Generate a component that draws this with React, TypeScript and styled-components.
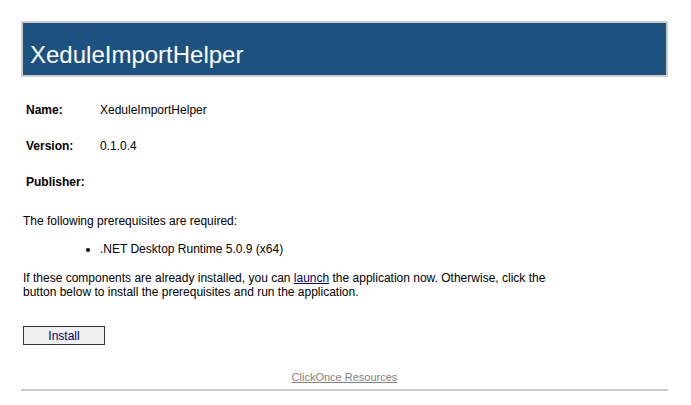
import React from "react";
import styled, { createGlobalStyle } from "styled-components";

const GlobalStyle = createGlobalStyle`
  html, body { margin: 0; padding: 0; background: #ffffff; }
  body { font-family: Tahoma, "Liberation Sans", "DejaVu Sans", sans-serif; color: #000; }
`;

const Page = styled.div`
  padding: 21px 23px 0 21px;
  font-size: 12px;
`;

const Header = styled.div`
  border: 2px solid #cccccc;
  background: #1d5280;
  display: flex;
  align-items: center;
  padding: 11px 7px 0;
  box-sizing: content-box;
  height: 41px;
`;

const Title = styled.h1`
  margin: 0;
  font-weight: normal;
  font-size: 24px;
  color: #ffffff;
`;

const Details = styled.div`
  display: grid;
  grid-template-columns: 74px auto;
  row-gap: 22px;
  padding: 26px 0 0 5px;
  line-height: 14px;
`;

const Label = styled.div`
  font-weight: bold;
`;

const Value = styled.div``;

const Text = styled.p`
  margin: 25px 0 0 2px;
  line-height: 14px;
  max-width: 540px;
`;

const List = styled.ul`
  margin: 14px 0 0 0;
  padding: 0 0 0 79px;
  line-height: 14px;
`;

const Item = styled.li``;

const Para = styled(Text)`
  margin-top: 15px;
`;

const LaunchLink = styled.a`
  color: #000066;
  text-decoration: underline;
`;

const InstallButton = styled.button`
  margin: 27px 0 0 2px;
  width: 82px;
  height: 19px;
  border: 1px solid #333;
  background: #efefef;
  color: #000066;
  font-family: inherit;
  font-size: 12px;
  padding: 0;
`;

const Footer = styled.div`
  margin-top: 25px;
  text-align: center;
  padding-bottom: 5px;
  border-bottom: 2px solid #cccccc;
`;

const FooterLink = styled.a`
  color: #808080;
  text-decoration: underline;
  font-size: 11px;
`;

export default function App() {
  return (
    <>
      <GlobalStyle />
      <Page>
        <Header>
          <Title>XeduleImportHelper</Title>
        </Header>
        <Details>
          <Label>Name:</Label>
          <Value>XeduleImportHelper</Value>
          <Label>Version:</Label>
          <Value>0.1.0.4</Value>
          <Label>Publisher:</Label>
          <Value></Value>
        </Details>
        <Text>The following prerequisites are required:</Text>
        <List>
          <Item>.NET Desktop Runtime 5.0.9 (x64)</Item>
        </List>
        <Para>
          If these components are already installed, you can <LaunchLink href="#">launch</LaunchLink> the application now. Otherwise, click the button below to install the prerequisites and run the application.
        </Para>
        <InstallButton>Install</InstallButton>
        <Footer>
          <FooterLink href="#">ClickOnce Resources</FooterLink>
        </Footer>
      </Page>
    </>
  );
}
